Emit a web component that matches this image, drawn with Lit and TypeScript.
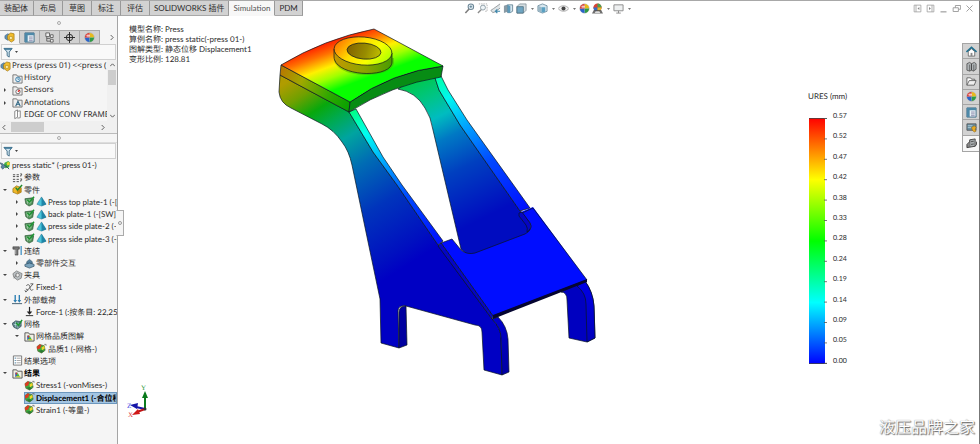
import { LitElement, html, svg, css, nothing } from "lit";
import { customElement, property, state } from "lit/decorators.js";
import { classMap } from "lit/directives/class-map.js";

const icons: Record<string, unknown> = {
  assembly: svg`<path d="M1 4l3-2 3 1v4l-3 2-3-2z" fill="#5f8fb5" stroke="#3a6280" stroke-width=".6"/><path d="M4 4l3-3 4 1v7L8 11 4 8z" fill="#f2bd2c" stroke="#9a6f08" stroke-width=".7"/><path d="M6 5h3v3H6z" fill="#fff3b0" stroke="#9a6f08" stroke-width=".5"/>`,
  props: svg`<path d="M1 1h10v10H1z" fill="#e8f1f6" stroke="#3c6a86"/><path d="M1 1h10v2.500H1zM1 1h3v10H1z" fill="#4e89a8"/><path d="M5.500 5.500h4M5.500 7.500h4M5.500 9.500h4" stroke="#88a"/>`,
  config: svg`<path d="M2 1h4v4H2z" fill="#eee" stroke="#555" stroke-width=".9"/><path d="M7 3h3v3H7zM7 8h3v3H7z" fill="#eee" stroke="#555" stroke-width=".9"/><path d="M3 5v5h4M3 7h4" fill="none" stroke="#555" stroke-width=".9"/>`,
  target: svg`<circle cx="6" cy="6" r="3.500" fill="none" stroke="#222"/><path d="M6 0v12M0 6h12" stroke="#222"/>`,
  ball: svg`<circle cx="6" cy="6" r="5" fill="#fff" stroke="#777" stroke-width=".5"/><path d="M6 6V1a5 5 0 0 1 5 5z" fill="#e7b91c"/><path d="M6 6h5a5 5 0 0 1-5 5z" fill="#2f9a45"/><path d="M6 6v5a5 5 0 0 1-5-5z" fill="#2a62c9"/><path d="M6 6H1a5 5 0 0 1 5-5z" fill="#d8312b"/><ellipse cx="4.500" cy="4" rx="2" ry="1.300" fill="#fff" opacity=".7"/>`,
  funnel: svg`<path d="M1 1.500h9L6.800 5.500V11L4.500 9.500v-4z" fill="#cfe4f0" stroke="#2f5f7c" stroke-width=".9"/><path d="M1 1.500h9L9 3H2z" fill="#2f6f92"/>`,
  folderHistory: svg`<path d="M1 2h4l1 1.500h5V11H1z" fill="#eee" stroke="#555" stroke-width=".8"/><circle cx="6.500" cy="7" r="2.500" fill="#d9ecf8" stroke="#29719e" stroke-width=".9"/><path d="M6.500 5.500V7H8" fill="none" stroke="#29719e" stroke-width=".7"/>`,
  folderSensor: svg`<path d="M1 2h4l1 1.500h5V11H1z" fill="#eee" stroke="#555" stroke-width=".8"/><circle cx="6.500" cy="7.300" r="2.300" fill="#fff" stroke="#444" stroke-width=".8"/><path d="M6.500 7.300L8.500 5.500" stroke="#d22" stroke-width="1.400"/>`,
  folderNote: svg`<path d="M1 2h4l1 1.500h5V11H1z" fill="#eee" stroke="#555" stroke-width=".8"/><path d="M4 10l2.500-5.500L9 10M5 8h3" fill="none" stroke="#27607f" stroke-width="1.100"/>`,
  plane: svg`<path d="M3 2.500L6 1v8L3 10.500zM6 2.500l3-.5v7.500l-3 .5" fill="#fff" stroke="#666" stroke-width=".8"/>`,
  study: svg`<path d="M5 3l4-2 2 2-1 5-4 1-2-3z" fill="#3fae49"/><path d="M7 3l3-1 1 3-3 1z" fill="#e8d52e"/><path d="M0 3l3 1 3 3-3 3-2-2 1-2z" fill="#5b87a3" stroke="#2d4b5e" stroke-width=".6"/><path d="M6 6l4 4" stroke="#2d4b5e"/>`,
  params: svg`<path d="M1 3h2.500M1 5h2.500M5 3h2.500M5 5h2.500M1 8h2.500M1 10.500h2.500M5 8h2.500M5 10.500h2.500" stroke="#444" stroke-width="1"/><path d="M9 2h1.500v1.500H9.500v1.500M9 7.500h1.500V9H9.500v1.500" fill="none" stroke="#444" stroke-width=".9"/>`,
  part: svg`<path d="M1 5l4-3 5 2v5l-4 2-5-2z" fill="#f0b92a" stroke="#8f6a0c" stroke-width=".7"/><path d="M5 7l5-3v5l-4 2z" fill="#c98e12"/><path d="M4 4l2 2.500L11 1" fill="none" stroke="#1e8a2b" stroke-width="1.600"/>`,
  solid: svg`<path d="M1 3l8-1 1.500 1-1 6-4 2L2 8.500z" fill="#4d8f57" stroke="#27512f" stroke-width=".7"/><path d="M2 4.500h6M2.500 6.500h6M4 4v5M6.500 4v5" stroke="#bfe0c2" stroke-width=".7"/><path d="M3.500 4L6 6.500 11 .8" fill="none" stroke="#1c9430" stroke-width="1.600"/>`,
  cone: svg`<path d="M6 1l5 8-5 2-5-2z" fill="#49c4da"/><path d="M6 1l5 8-5 2z" fill="#1f86a8"/><path d="M6 1L1 9l5 2 5-2z" fill="none" stroke="#1c6a88" stroke-width=".5"/>`,
  connect: svg`<path d="M1 2h7v2.500H6.500V11h-3V4.500H1z" fill="#777" stroke="#333" stroke-width=".6"/><path d="M4 5v5" stroke="#ccc" stroke-width=".7"/><path d="M10 1v10" stroke="#3f8fc2" stroke-width="1.400"/>`,
  interact: svg`<path d="M3 4l3-2.500L9 4v3H3z" fill="#53809d" stroke="#28485c" stroke-width=".6"/><path d="M1 7l5-1.500L11 7v2l-5 2-5-2z" fill="#7ba4bd" stroke="#28485c" stroke-width=".7"/>`,
  fixture: svg`<path d="M1 4l4-3 6 3-1 5-4 2-4-3z" fill="#b9bfc2" stroke="#666" stroke-width=".7"/><circle cx="6" cy="5.500" r="2" fill="#eee" stroke="#666" stroke-width=".7"/><path d="M2 9l3-4" stroke="#777"/>`,
  fixed: svg`<path d="M2 11L10 2M10 2H7M2.500 4c2-2 4-1 4 2s2 4 3.500 2M2 11l-1-2M4.500 9L2 7.500" fill="none" stroke="#444" stroke-width=".9"/>`,
  loads: svg`<path d="M3.500 1v7M8 1v7" stroke="#2d7fb3" stroke-width="1.500"/><path d="M1.500 6.500h4l-2 3zM6 6.500h4l-2 3z" fill="#2d7fb3"/><path d="M0 10.500h11" stroke="#39576b"/>`,
  force: svg`<path d="M6 1v7" stroke="#222" stroke-width="1.300"/><path d="M3 6h6L6 9.500z" fill="#222"/><path d="M2 10.500h8" stroke="#222"/>`,
  mesh: svg`<path d="M0 5l4-3 6 1v5l-4 3-4-2z" fill="#5f7f8c" stroke="#2e464f" stroke-width=".7"/><path d="M4 3v6M6.500 4v6M2 6h7" stroke="#cfe" stroke-width=".6"/><path d="M4.500 4L7 7l4-6" fill="none" stroke="#1d9431" stroke-width="1.600"/>`,
  folderPlot: svg`<path d="M1 2h4l1 1.500h5V11H1z" fill="#f1efe4" stroke="#444" stroke-width=".9"/><path d="M3.500 5h2v5h-2z" fill="#2d66c4"/><path d="M4 5h2v2H4z" fill="#d93a2b"/><path d="M6 5l3 5H5z" fill="#42b649"/><path d="M4 9h5v1H4z" fill="#e8d02e"/>`,
  plot: svg`<path d="M1 4l3-2.500L9 3l1 5-4 3-4-2z" fill="#3dab3f" stroke="#4b4b20" stroke-width=".6"/><path d="M1 4l3-2.500 2 .6L4.500 6 1.500 7z" fill="#dc3b22"/><path d="M6 5l3-2 .5 3-3 2z" fill="#f0d42a"/><path d="M3 8.500l3-1 3 1.500-3 2z" fill="#2a7a35"/><path d="M9 1.500h2v1.500" fill="none" stroke="#555" stroke-width=".7"/>`,
  options: svg`<path d="M1.500 1h9v10h-9z" fill="#fff" stroke="#666" stroke-width=".9"/><path d="M3 3.500h1M3 6h1M3 8.500h1" stroke="#2d6f98" stroke-width="1.300"/><path d="M5 3.500h4.500M5 6h4.500M5 8.500h4.500" stroke="#999" stroke-width=".9"/>`,
  zoomFit: svg`<circle cx="7.500" cy="4" r="3" fill="#e8f1f6" stroke="#6d8797" stroke-width="1.100"/><path d="M5.500 6.500L1.500 11" stroke="#7d7d7d" stroke-width="1.700"/><path d="M6 4h3M7.500 2.500v3" stroke="#4c7388" stroke-width=".8"/>`,
  zoomArea: svg`<path d="M2 1h9v8H8" fill="none" stroke="#999" stroke-width=".8" stroke-dasharray="1.500 1"/><circle cx="6.500" cy="5" r="2.700" fill="#eef4f7" stroke="#8a9aa3"/><path d="M4.500 7.300L1 11" stroke="#8c8c8c" stroke-width="1.500"/>`,
  previous: svg`<path d="M11 1L4 6l-3 2 2 2.500 3-1 5-4" fill="#dfe5e8" stroke="#8a8f92" stroke-width=".9"/><path d="M11 9H6M8 7L6 9l2 2" fill="none" stroke="#3f87ab" stroke-width="1.300"/>`,
  section: svg`<path d="M1 3l4-1.500v8L1 11z" fill="#8a9ba5"/><path d="M5 2h5.500v7L8 10.500H5z" fill="#d7e6ee" stroke="#4d7183" stroke-width=".8"/><path d="M5 2l3 1.500v7H5z" fill="#5c9aba"/>`,
  orient: svg`<path d="M1 4l3-3h7v7l-3 3H1z" fill="#d4dde1" stroke="#7b8b93" stroke-width=".8"/><path d="M1 4h7v7H1z" fill="#6fa5c2" stroke="#486878" stroke-width=".8"/>`,
  display: svg`<path d="M1 3l5-2 5 2v6l-5 2-5-2z" fill="#d8e7ef" stroke="#5a7d90" stroke-width=".8"/><path d="M1 3l4 1.500v6L1 9z" fill="#9cb7c5"/><path d="M5 4.500h4v5l-4 1z" fill="#5aa0c2"/>`,
  eye: svg`<path d="M0 6c3-4 9-4 12 0-3 4-9 4-12 0z" fill="#eee" stroke="#999" stroke-width=".8"/><circle cx="6" cy="6" r="2.200" fill="#444"/>`,
  scene: svg`<circle cx="6" cy="5" r="4.500" fill="#d94335"/><path d="M6 5V.5A4.500 4.500 0 0 1 10.500 5z" fill="#49a350"/><path d="M6 5H1.500A4.500 4.500 0 0 0 6 9.500z" fill="#336fc7"/><path d="M6 5h4.500A4.500 4.500 0 0 1 6 9.500z" fill="#e4b826"/><path d="M0 11.500l2-4h8l2 4z" fill="#555" opacity=".85"/><path d="M3 11l1-2h4l1 2z" fill="#ddd"/>`,
  monitor: svg`<path d="M1 2h10v6.500H1z" fill="#eef0f1" stroke="#888" stroke-width="1"/><path d="M6 8.500V11M3.500 11h5" stroke="#888"/>`,
  paneL: svg`<path d="M1.500 1.500h9v9h-9zM4 1.500v9" fill="none" stroke="#999"/><path d="M8.500 4v4L6 6z" fill="#888"/>`,
  paneR: svg`<path d="M1.500 1.500h9v9h-9zM8 1.500v9" fill="none" stroke="#999"/><path d="M4 4v4l2.500-2z" fill="#888"/>`,
  min: svg`<path d="M2 10.500h8" stroke="#888" stroke-width="1.300"/>`,
  restore: svg`<path d="M4.500 5V2h7v5H9M1.500 5h7v5h-7z" fill="none" stroke="#999" stroke-width="1.200"/>`,
  close: svg`<path d="M2 2l8 8M10 2l-8 8" stroke="#999" stroke-width="1.200"/>`,
  home: svg`<path d="M2.500 6v5h7V6L6 3z" fill="#fff" stroke="#555" stroke-width=".8"/><path d="M.5 6.500L6 1.500l5.500 5" fill="none" stroke="#22708f" stroke-width="1.700"/><path d="M5 7.500h2V11H5z" fill="#888"/>`,
  library: svg`<path d="M1 3l3-1.500L6 3v7l-2 1-3-1zM6 3l3-1.500 2 1.500v6l-3 2-2-1z" fill="#aeb3b5" stroke="#444" stroke-width=".8"/><path d="M4 4v7M8.500 4v7" stroke="#444" stroke-width=".7"/>`,
  folder: svg`<path d="M1 10V2h4l1 1.500h3.500V5" fill="#fff" stroke="#555" stroke-width=".9"/><path d="M1 10l2.500-5H11L9 10z" fill="#eee" stroke="#555" stroke-width=".9"/>`,
  custom: svg`<path d="M1 2h10v7H1z" fill="#6d93a5" stroke="#444" stroke-width=".8"/><path d="M2 4h5M2 6h4" stroke="#a9c4d0"/><path d="M6 6l3-2 2 2-1 2 1 2-2 1-2-2z" fill="#e9ab25" stroke="#7c5a10" stroke-width=".5"/>`,
  forum: svg`<path d="M4 2l6-1v8l-6 1z" fill="#a9aeb0" stroke="#333" stroke-width=".9"/><path d="M4 4L1 7v3.500L4 10M10 9l1.500-2V4" fill="#888" stroke="#333" stroke-width=".9"/><path d="M5.500 4l3-.5M5.500 7l3-.5" stroke="#444" stroke-width=".9"/>`,
};

const icon = (name: string) =>
  html`<svg class="icon" viewBox="0 0 12 12" aria-hidden="true">${icons[name]}</svg>`;

const baseStyles = css`
  *, *::before, *::after { box-sizing: border-box; }
  button { font: inherit; color: inherit; border: 0; margin: 0; padding: 0; background: none; }
  svg { display: block; flex: none; }
  .icon { width: 11px; height: 11px; }
`;

interface Item {
  level: number;
  label: string;
  icons: string[];
  open?: boolean;
  bold?: boolean;
  selected?: boolean;
}

const featureItems: Item[] = [
  { level: 0, label: "Press (press 01) <<press (", icons: ["assembly"] },
  { level: 1, label: "History", icons: ["folderHistory"] },
  { level: 1, label: "Sensors", icons: ["folderSensor"], open: false },
  { level: 1, label: "Annotations", icons: ["folderNote"], open: false },
  { level: 1, label: "EDGE OF CONV FRAME", icons: ["plane"] },
];

const studyItems: Item[] = [
  { level: 0, label: "press static* (-press 01-)", icons: ["study"] },
  { level: 1, label: "参数", icons: ["params"] },
  { level: 1, label: "零件", icons: ["part"], open: true },
  { level: 2, label: "Press top plate-1 (-[SW]", icons: ["solid", "cone"], open: false },
  { level: 2, label: "back plate-1 (-[SW]Plain", icons: ["solid", "cone"], open: false },
  { level: 2, label: "press side plate-2 (-[SW]", icons: ["solid", "cone"], open: false },
  { level: 2, label: "press side plate-3 (-[SW]", icons: ["solid", "cone"], open: false },
  { level: 1, label: "连结", icons: ["connect"], open: true },
  { level: 2, label: "零部件交互", icons: ["interact"], open: false },
  { level: 1, label: "夹具", icons: ["fixture"], open: true },
  { level: 2, label: "Fixed-1", icons: ["fixed"] },
  { level: 1, label: "外部载荷", icons: ["loads"], open: true },
  { level: 2, label: "Force-1 (:按条目: 22,250", icons: ["force"] },
  { level: 1, label: "网格", icons: ["mesh"], open: true },
  { level: 2, label: "网格品质图解", icons: ["folderPlot"], open: true },
  { level: 3, label: "品质1 (-网格-)", icons: ["plot"] },
  { level: 1, label: "结果选项", icons: ["options"] },
  { level: 1, label: "结果", icons: ["folderPlot"], open: true, bold: true },
  { level: 2, label: "Stress1 (-vonMises-)", icons: ["plot"] },
  { level: 2, label: "Displacement1 (-合位移-)", icons: ["plot"], bold: true, selected: true },
  { level: 2, label: "Strain1 (-等量-)", icons: ["plot"] },
];

@customElement("item-tree")
class ItemTree extends LitElement {
  @property({ attribute: false }) items: Item[] = [];

  static styles = [baseStyles, css`
    :host { display: grid; grid-auto-rows: 1fr; overflow: hidden; }
    .row { display: flex; align-items: center; min-width: 0; min-height: 0; white-space: nowrap; }
    .slot { width: 12px; flex: none; display: flex; }
    .arrow { padding-left: 3px; }
    .arrow svg { width: 4px; height: 4px; fill: #444; }
    .content { display: flex; align-items: center; flex: 1; height: 100%; min-width: 0; }
    .selected { background: #a3c5e3; outline: 1px solid #6c97bd; outline-offset: -1px; }
    .label { line-height: 12px; }
    .bold { font-weight: 700; color: #000; }
  `];

  render() {
    return this.items.map((item) => html`
      <div class="row" role="treeitem" aria-expanded=${item.open ?? nothing}>
        ${Array.from({ length: item.level }, (_, i) => html`
          <span class="slot arrow">${i === item.level - 1 && item.open !== undefined
            ? html`<svg viewBox="0 0 4 4"><path d=${item.open ? "M0 1h4L2 3z" : "M1 0v4l2-2z"} /></svg>`
            : nothing}</span>`)}
        <span class=${classMap({ content: true, selected: !!item.selected })}>
          ${item.icons.map((name) => html`<span class="slot">${icon(name)}</span>`)}
          <span class=${classMap({ label: true, bold: !!item.bold })}>${item.label}</span>
        </span>
      </div>`);
  }
}

@customElement("stress-model")
class StressModel extends LitElement {
  static styles = css`
    :host { display: block; }
    svg { display: block; width: 340px; height: 364px; }
    .edge { stroke: #0a1520; stroke-width: .7; stroke-linejoin: round; }
  `;

  render() {
    return html`<svg viewBox="270 16 340 364" role="img" aria-label="Press displacement plot">
      <defs>
        <linearGradient id="top" gradientUnits="userSpaceOnUse" x1="315" y1="45" x2="332" y2="91">
          <stop offset="0" stop-color="#ff1400" /><stop offset=".25" stop-color="#ff7000" />
          <stop offset=".52" stop-color="#fff000" /><stop offset=".74" stop-color="#a0ff00" />
          <stop offset="1" stop-color="#08ff00" />
        </linearGradient>
        <linearGradient id="front" gradientUnits="userSpaceOnUse" x1="281" y1="70" x2="349" y2="107">
          <stop offset="0" stop-color="#b87800" /><stop offset=".3" stop-color="#a0a800" />
          <stop offset=".7" stop-color="#30a800" /><stop offset="1" stop-color="#08a000" />
        </linearGradient>
        <linearGradient id="side" gradientUnits="userSpaceOnUse" x1="282" y1="85" x2="400" y2="270">
          <stop offset="0" stop-color="#b09c00" /><stop offset=".09" stop-color="#70a000" />
          <stop offset=".18" stop-color="#08a80c" /><stop offset=".26" stop-color="#00aa50" />
          <stop offset=".36" stop-color="#00a4a0" /><stop offset=".5" stop-color="#006cb4" />
          <stop offset=".7" stop-color="#0034bc" /><stop offset=".92" stop-color="#0010c0" />
          <stop offset="1" stop-color="#0000c4" />
        </linearGradient>
        <linearGradient id="back" gradientUnits="userSpaceOnUse" x1="412" y1="84" x2="480" y2="220">
          <stop offset="0" stop-color="#00c850" /><stop offset=".14" stop-color="#00c488" />
          <stop offset=".27" stop-color="#00bcc0" /><stop offset=".42" stop-color="#0078c4" />
          <stop offset=".64" stop-color="#0040c0" /><stop offset="1" stop-color="#000cc0" />
        </linearGradient>
        <linearGradient id="stripA" gradientUnits="userSpaceOnUse" x1="352" y1="110" x2="440" y2="243">
          <stop offset="0" stop-color="#00ff80" /><stop offset=".17" stop-color="#00fff0" />
          <stop offset=".4" stop-color="#00a0ff" /><stop offset=".65" stop-color="#0048ff" />
          <stop offset="1" stop-color="#0010ff" />
        </linearGradient>
        <linearGradient id="stripB" gradientUnits="userSpaceOnUse" x1="438" y1="78" x2="525" y2="210">
          <stop offset="0" stop-color="#00ffa8" /><stop offset=".14" stop-color="#00f8f0" />
          <stop offset=".36" stop-color="#00a0ff" /><stop offset=".62" stop-color="#0048ff" />
          <stop offset="1" stop-color="#0010ff" />
        </linearGradient>
        <linearGradient id="ring" gradientUnits="userSpaceOnUse" x1="345" y1="38" x2="380" y2="66">
          <stop offset="0" stop-color="#ff8800" /><stop offset=".35" stop-color="#ffdc00" />
          <stop offset=".7" stop-color="#f8ff00" /><stop offset="1" stop-color="#b8ff00" />
        </linearGradient>
        <linearGradient id="wall" gradientUnits="userSpaceOnUse" x1="334" y1="60" x2="393" y2="64">
          <stop offset="0" stop-color="#c49800" /><stop offset=".5" stop-color="#90a400" />
          <stop offset="1" stop-color="#489c00" />
        </linearGradient>
        <linearGradient id="hole" gradientUnits="userSpaceOnUse" x1="346" y1="48" x2="382" y2="56">
          <stop offset="0" stop-color="#806000" /><stop offset=".55" stop-color="#988c00" />
          <stop offset="1" stop-color="#c4c400" />
        </linearGradient>
        <linearGradient id="leg" gradientUnits="userSpaceOnUse" x1="0" y1="285" x2="0" y2="372">
          <stop offset="0" stop-color="#0000e4" /><stop offset="1" stop-color="#0000a4" />
        </linearGradient>
      </defs>

      <path class="edge" fill="#0000c0" d="M561 292q6 0 6 8l2 38 18 4 8-4-1-32q-1-14-9-25l-10 4z" />
      <path class="edge" fill="url(#leg)" d="M577 286q9 7 9 18l1 38 8-4-1-32q-1-14-9-25z" />

      <path class="edge" fill="url(#back)" d="M398 89q18 3 27 19 6 9 8 22l28 119 8 7 62-22-4-18-7-5L460 125l-21-35-5-16-20 3z" />
      <path class="edge" fill="url(#stripB)" d="M434 75l6-1 8 16 19 30 63 88-10 3-60-86-21-35z" />

      <path class="edge" fill="url(#side)" d="M280 75l69 37 24 40 24 33 41 60 54 74q9 9 9 19l1 37-18-5-2-38q0-7-7-7l-69-19q-8-1-8 5l1 37-18-5-1-44-28-134q-3-14-10-23-8-12-20-18l-31-16q-11-5-12-16z" />
      <path class="edge" fill="#0000a0" d="M399 348v-36q0-6 7-6l1 39z" />
      <path class="edge" fill="url(#leg)" d="M492 319l6-2q9 9 10 22l1 33-7 3-1-37q0-10-9-19z" />
      <path class="edge" fill="url(#stripA)" d="M349 112l7-3 27 48 19 28 41 56-5 4-41-60-24-33z" />

      <path fill="#000dff" d="M441 243l11-4 9 11q6 5 14 3l50-19q8-4 5-11l-9-11 12-5 54 73-94 36z" />
      <path class="edge" fill="none" d="M441 243l11-4 9 11q6 5 14 3l50-19q8-4 5-11l-8-10 11-5 54 72-94 36z" />
      <path class="edge" fill="#0505c4" d="M441 243l-3 3 54 73 1-3z" />
      <path class="edge" fill="#0505c4" d="M522 212l-3 1v3l7 9q2 3 1 7 6-4 3-9z" />
      <path fill="#050530" d="M493 315l94-36v3l-94 37z" />

      <path class="edge" fill="url(#front)" d="M281 65l69 37-1 10-69-37z" />
      <path class="edge" fill="#078c14" d="M350 102q42-30 93-36l-2 11q-50 8-92 35z" />
      <path class="edge" fill="url(#top)" d="M281 65q43-26 93-36l69 37q-51 6-93 36z" />
      <path fill="#449600" opacity=".4" d="M334 60c3 19 57 20 60 3v-5h-58z" />
      <path class="edge" fill="url(#wall)" d="M334 49v8c1 20 58 22 58 5v-9z" />
      <g transform="rotate(5 363 51)">
        <ellipse class="edge" fill="url(#ring)" cx="363" cy="51" rx="29" ry="14" />
        <ellipse class="edge" fill="url(#hole)" cx="364" cy="51" rx="17" ry="8" />
      </g>
    </svg>`;
  }
}

const legendValues = ["0.57", "0.52", "0.47", "0.42", "0.38", "0.33", "0.28", "0.24", "0.19", "0.14", "0.09", "0.05", "0.00"];

@customElement("color-legend")
class ColorLegend extends LitElement {
  static styles = [baseStyles, css`
    :host { display: block; }
    .title { line-height: 10px; margin-bottom: 10px; white-space: nowrap; }
    .scale { display: flex; gap: 5px; }
    .bar { width: 20px; height: 247px; margin-top: 7px; }
    .values { display: flex; flex-direction: column; justify-content: space-between; height: 255px; margin: 0; padding: 0; list-style: none; font-size: 7px; line-height: 10px; }
  `];

  render() {
    return html`
      <div class="title">URES (mm)</div>
      <div class="scale">
        <svg class="bar" viewBox="0 0 20 247" aria-hidden="true">
          <defs><linearGradient id="g" x1="0" y1="0" x2="0" y2="1">
            <stop offset="0" stop-color="#f00" /><stop offset=".25" stop-color="#ff0" />
            <stop offset=".5" stop-color="#0f0" /><stop offset=".75" stop-color="#0ff" />
            <stop offset="1" stop-color="#00f" />
          </linearGradient></defs>
          <rect x="1" y="0" width="16" height="246" fill="url(#g)" />
          <path d="M1 .5h18M1 245.500h18" stroke="#444" stroke-width=".8" />
          ${legendValues.map((_, i) => svg`<path d="M16 ${i * 20.4 + 0.5}h3" stroke="#555" stroke-width=".8" />`)}
        </svg>
        <ul class="values">${legendValues.map((v) => html`<li>${v}</li>`)}</ul>
      </div>`;
  }
}

@customElement("app-root")
class AppRoot extends LitElement {
  @state() private tab = "Simulation";

  private tabs = ["装配体", "布局", "草图", "标注", "评估", "SOLIDWORKS 插件", "Simulation", "PDM"];

  static styles = [baseStyles, css`
    :host {
      display: flex; flex-direction: column; min-height: 100vh; background: #fff; color: #2c2c2c;
      border-top: 1px solid #a8a8a8; border-right: 1px solid #777;
      font: 8px/12px Lato, "Noto Sans CJK SC", sans-serif; box-sizing: border-box;
      text-rendering: geometricPrecision;
    }
    .header { display: flex; align-items: flex-start; height: 15px; flex: none; }
    .tabs { display: flex; height: 15px; }
    .tab { background: #d2d2d2; border-right: 1px solid #999; border-bottom: 1px solid #a8a8a8; padding: 0 6px; white-space: nowrap; }
    .tab:first-child { padding: 0 5px 0 4px; }
    .tab.latin { padding: 0 4px; }
    .tab.on { background: #f7f7f7; color: #555; border-bottom-color: #f7f7f7; }
    .views { display: flex; align-items: center; gap: 2px; height: 15px; flex: 1; padding-left: 161px; }
    .views button, .window button { display: flex; align-items: center; gap: 3px; }
    .views .caret { width: 3px; height: 2px; fill: #777; margin: 0 1px; }
    .window { display: flex; align-items: center; gap: 4px; height: 15px; padding-right: 5px; }
    .window .icon { width: 9px; height: 9px; }

    .body { display: flex; flex: 1; }
    .side { position: relative; display: flex; flex-direction: column; width: 118px; flex: none; background: #f5f5f5; border-right: 1px solid #a5a5a5; }
    .grip { height: 14px; flex: none; display: flex; align-items: center; justify-content: center; }
    .grip::after { content: ""; width: 4px; height: 4px; border: 1px solid #aaa; border-radius: 2px; }
    .grip.low { height: 10px; border-top: 1px solid #bbb; border-bottom: 1px solid #ddd; }
    .modes { display: flex; height: 14px; flex: none; }
    .mode { width: 20px; display: flex; align-items: center; justify-content: center; background: #d0d0d0; border: solid #a8a8a8; border-width: 1px 1px 1px 0; }
    .mode.on { background: #f5f5f5; border-bottom-color: #f5f5f5; }
    .more { flex: 1; display: flex; align-items: center; justify-content: flex-end; padding-right: 3px; }
    .chev { width: 5px; height: 5px; fill: none; stroke: #444; stroke-width: 1; }
    .filter { display: flex; align-items: center; gap: 1px; height: 16px; margin: 0 1px; padding-left: 1px; flex: none; background: #f9f9f9; border: 1px solid #d0d0d0; }
    .filter .caret { width: 3px; height: 2px; fill: #444; }
    .filter input { flex: 1; min-width: 0; height: 12px; border: 0; padding: 0 2px; background: none; font: inherit; outline: none; }
    .upper { display: flex; height: 61px; flex: none; font-family: "Noto Sans", sans-serif; }
    .upper item-tree { flex: 1; min-width: 0; }
    .vbar { width: 10px; display: flex; flex-direction: column; align-items: center; gap: 2px; padding: 3px 0; background: #f0f0f0; }
    .vthumb { width: 8px; height: 15px; background: #cdcdcd; }
    .vbar .end { margin-top: auto; }
    .hbar { display: flex; align-items: center; gap: 4px; height: 12px; padding: 0 12px 0 2px; flex: none; background: #f0f0f0; }
    .hthumb { width: 33px; height: 10px; background: #cdcdcd; }
    .hbar .end { margin-left: auto; }
    .lower { height: 257px; flex: none; }
    .handle { position: absolute; left: 116px; top: 194px; width: 8px; height: 26px; display: flex; align-items: center; justify-content: center; background: #f5f5f5; border: 1px solid #aaa; border-left-color: #f5f5f5; }
    .handle::after { content: ""; width: 4px; height: 4px; border: 1px solid #999; border-radius: 2px; }

    .view { flex: 1; display: flex; min-width: 0; }
    .notes { width: 152px; flex: none; display: flex; flex-direction: column; justify-content: space-between; padding: 8px 0 24px 11px; white-space: nowrap; }
    .notes p { margin: 0; line-height: 10px; }
    .triad { width: 24px; height: 38px; margin-left: -3px; }
    .triad text { font: 7px "Liberation Serif", serif; }
    .space { flex: 1; display: flex; justify-content: flex-end; padding-top: 75px; }
    color-legend { width: 44px; flex: none; }
    .edgecol { width: 127px; flex: none; display: flex; flex-direction: column; align-items: flex-end; justify-content: space-between; }
    .dock { width: 17px; height: 109px; margin-top: 27px; display: grid; grid-auto-rows: 1fr; border: 1px solid #a5a5a5; border-right: 0; }
    .dock button { display: flex; align-items: center; justify-content: center; background: #d2d2d2; border-bottom: 1px solid #a5a5a5; min-height: 0; }
    .dock button:last-child { background: #f8f8f8; border-bottom: 0; }
    .mark { font: 16px/20px "Noto Sans CJK SC", sans-serif; color: #fff; text-shadow: 1px 1px 1px #666, 0 0 1px #777; white-space: nowrap; padding: 0 4px 8px 0; }
  `];

  private caret = html`<svg class="caret" viewBox="0 0 3 2"><path d="M0 0h3L1.500 2z" /></svg>`;

  private chevron(d: string, end = false) {
    return html`<svg class=${classMap({ chev: true, end })} viewBox="0 0 6 6"><path d=${d} /></svg>`;
  }

  private filter(label: string) {
    return html`<label class="filter">${icon("funnel")}${this.caret}<input aria-label=${label} /></label>`;
  }

  render() {
    const views: [string, boolean][] = [["zoomFit", false], ["zoomArea", false], ["previous", false], ["section", false], ["orient", true], ["display", true], ["eye", true], ["ball", false], ["scene", true], ["monitor", true]];
    return html`
      <header class="header">
        <nav class="tabs">${this.tabs.map((t) => html`
          <button class=${classMap({ tab: true, latin: /^[A-Z]/.test(t), on: t === this.tab })} @click=${() => (this.tab = t)}>${t}</button>`)}
        </nav>
        <div class="views">${views.map(([name, drop]) => html`
          <button aria-label=${name}>${icon(name)}${drop ? this.caret : nothing}</button>`)}
        </div>
        <div class="window">${["paneL", "paneR", "min", "restore", "close"].map((n) => html`<button aria-label=${n}>${icon(n)}</button>`)}</div>
      </header>
      <div class="body">
        <aside class="side">
          <div class="grip"></div>
          <div class="modes">
            ${["assembly", "props", "config", "target", "ball"].map((n, i) => html`
              <button class=${classMap({ mode: true, on: i === 0 })} aria-label=${n}>${icon(n)}</button>`)}
            <button class="more" aria-label="more">${this.chevron("M2 0l3 3-3 3")}</button>
          </div>
          ${this.filter("Filter features")}
          <div class="upper">
            <item-tree role="tree" .items=${featureItems}></item-tree>
            <div class="vbar">${this.chevron("M0 4l3-3 3 3")}<div class="vthumb"></div>${this.chevron("M0 2l3 3 3-3", true)}</div>
          </div>
          <div class="hbar">${this.chevron("M4 0L1 3l3 3")}<div class="hthumb"></div>${this.chevron("M2 0l3 3-3 3", true)}</div>
          <div class="grip low"></div>
          ${this.filter("Filter study")}
          <item-tree class="lower" role="tree" .items=${studyItems}></item-tree>
          <button class="handle" aria-label="collapse"></button>
        </aside>
        <main class="view">
          <section class="notes">
            <div>
              <p>模型名称: Press</p>
              <p>算例名称: press static(-press 01-)</p>
              <p>图解类型: 静态位移 Displacement1</p>
              <p>变形比例: 128.81</p>
            </div>
            <svg class="triad" viewBox="125 382 24 38" aria-hidden="true">
              <path d="M144 409V394" stroke="#0a7a1c" stroke-width="2" /><path d="M141 398l3-7 3 7z" fill="#0a7a1c" />
              <path d="M144 409l-9-2" stroke="#1515a8" stroke-width="2" /><path d="M129 405l8-2-1 6z" fill="#1515a8" />
              <path d="M144 409l-8 3" stroke="#c01414" stroke-width="2" /><path d="M131 415l6-6 2 5z" fill="#d01818" />
              <circle cx="144" cy="409" r="1.500" fill="#333" />
              <text x="140" y="390" fill="#2a9a3a">Y</text>
              <text x="126" y="408" fill="#3a3ae0">Z</text>
              <text x="127" y="417" fill="#e03a3a">X</text>
            </svg>
          </section>
          <stress-model></stress-model>
          <div class="space"><color-legend></color-legend></div>
          <div class="edgecol">
            <div class="dock">${["home", "library", "folder", "ball", "props", "custom", "forum"].map((n) => html`<button aria-label=${n}>${icon(n)}</button>`)}</div>
            <div class="mark">液压品牌之家</div>
          </div>
        </main>
      </div>`;
  }
}
